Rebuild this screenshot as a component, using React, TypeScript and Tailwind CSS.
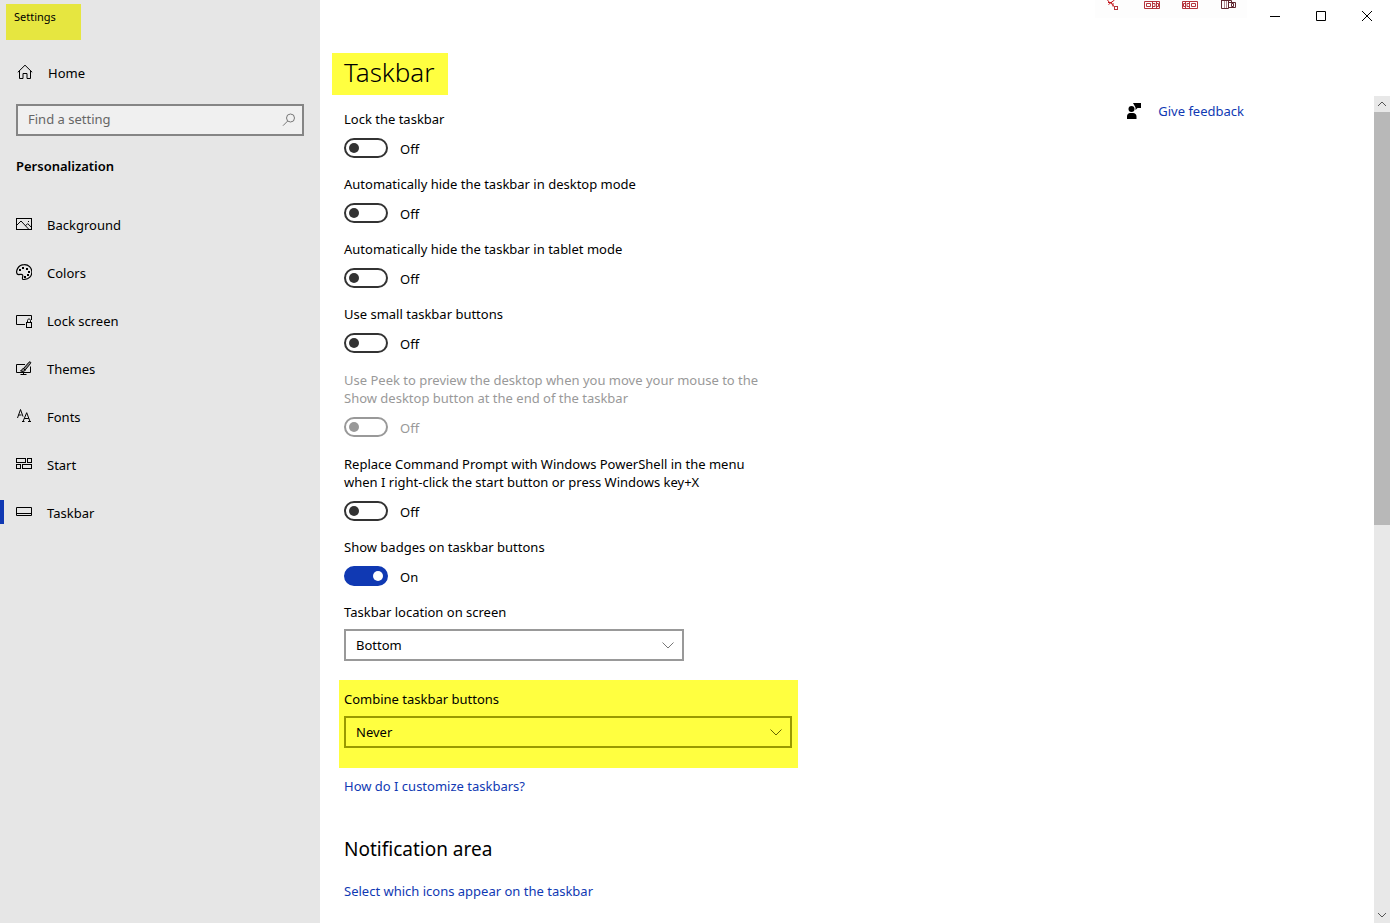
import { useState } from 'react';
import type { ReactNode } from 'react';

interface ToggleSetting {
  id: string;
  label: string;
  on?: boolean;
  disabled?: boolean;
  multiline?: boolean;
}

const TOGGLES: ToggleSetting[] = [
  { id: 'lock', label: 'Lock the taskbar' },
  { id: 'hide-desktop', label: 'Automatically hide the taskbar in desktop mode' },
  { id: 'hide-tablet', label: 'Automatically hide the taskbar in tablet mode' },
  { id: 'small', label: 'Use small taskbar buttons' },
  {
    id: 'peek',
    label: 'Use Peek to preview the desktop when you move your mouse to the Show desktop button at the end of the taskbar',
    disabled: true,
    multiline: true,
  },
  {
    id: 'powershell',
    label: 'Replace Command Prompt with Windows PowerShell in the menu when I right-click the start button or press Windows key+X',
    multiline: true,
  },
  { id: 'badges', label: 'Show badges on taskbar buttons', on: true },
];

function Icon({ children }: { children: ReactNode }) {
  return (
    <svg viewBox="0 0 16 16" className="size-4 shrink-0" fill="none" stroke="#000" aria-hidden="true">
      {children}
    </svg>
  );
}

const NAV: { label: string; icon: ReactNode }[] = [
  {
    label: 'Background',
    icon: (
      <>
        <rect x="0.5" y="2.5" width="15" height="11" />
        <path d="M.5 9.5 5 5l8 8.5M9.5 9.8l2.2-2.2 3.8 3.8" />
        <path d="M12 5.5h1" />
      </>
    ),
  },
  {
    label: 'Colors',
    icon: (
      <>
        <path
          strokeWidth="1.2"
          d="M6.7 15.2c-1-1 .8-3-.2-4.4-1.2-1.5-3.7.9-5.3-.8C-.4 7.5 1.7.6 8.3.6a7.4 7.4 0 0 1 .4 14.8c-.7.1-1.5.2-2-.2Z"
        />
        <path strokeWidth="2" d="M3 6h2M6 4h2M10 5h2M12 8h2M11 11h2M8 13h2" />
      </>
    ),
  },
  {
    label: 'Lock screen',
    icon: (
      <>
        <path d="M9 12.5H.5v-9h15V8" />
        <rect x="10.5" y="10.5" width="5" height="5" />
        <path d="M11.5 10.5V8.5c0-2 3-2 3 0v2" />
      </>
    ),
  },
  {
    label: 'Themes',
    icon: (
      <>
        <path d="M9 4.5H.5v8h14v-6M7.5 12.5v2M4.5 14.5h6" />
        <path
          fill="#888"
          d="M7.5 8.5 13 2.2c1-1 2.300.1 1.500 1.300L9.200 10ZM7.500 8.500c-2 0-1 2-3 2.300 2 1.200 4.500.700 4.700-.8Z"
        />
      </>
    ),
  },
  {
    label: 'Fonts',
    icon: (
      <>
        <path d="m1.5 10 3-8.500 2.500 7M2.500 7h3" />
        <path d="m7 13.5 3.700-8.800 3.300 8.800M8.300 10.500h4.500M6 13.500h2.500M12 13.500h3" />
      </>
    ),
  },
  {
    label: 'Start',
    icon: (
      <>
        <rect x="0.5" y="2.5" width="9" height="4" />
        <rect x="11.5" y="2.5" width="4" height="4" />
        <rect x="0.5" y="8.5" width="4" height="4" />
        <rect x="6.5" y="8.5" width="9" height="4" />
      </>
    ),
  },
  {
    label: 'Taskbar',
    icon: <path d="M.5 3.5h15v8H.5ZM.5 9.5h15" />,
  },
];

function Sidebar() {
  return (
    <aside className="w-80 shrink-0 bg-[#e6e6e6]">
      <div className="ml-1.5 mt-1 h-9 w-[75px] bg-[#e6e640] pl-2 pt-1 text-[11px]">Settings</div>
      <a href="#home" className="mt-2 flex h-12 items-center gap-[15px] pl-[17px]">
        <Icon>
          <path d="M.8 8.3 8 1.2l7.2 7.1M2.5 6.8v7.7H6v-5h4v5h3.5V6.8" />
        </Icon>
        <span className="pt-0.5">Home</span>
      </a>
      <div className="mx-4 mt-2 flex h-8 items-center border-2 border-[#858585] bg-[#f0f0f0] pl-2.5 pr-1.5">
        <input
          type="text"
          aria-label="Find a setting"
          placeholder="Find a setting"
          className="min-w-0 flex-1 bg-transparent pb-0.5 outline-none placeholder:text-[#666]"
        />
        <svg viewBox="0 0 14 14" className="size-3.5" fill="none" stroke="#777" aria-hidden="true">
          <circle cx="8.5" cy="5" r="4" />
          <path d="M5.7 8 1 12.7" />
        </svg>
      </div>
      <h2 className="ml-4 mt-5 font-semibold leading-5">Personalization</h2>
      <nav className="mt-6">
        {NAV.map(({ label, icon }) => {
          const active = label === 'Taskbar';
          return (
            <a key={label} href={`#${label}`} className="flex h-12 items-center">
              <span className={active ? 'h-6 w-1 bg-[#1039b3]' : 'h-6 w-1'} />
              <span className="flex items-center gap-[15px] pl-3">
                <Icon>{icon}</Icon>
                <span className="pt-0.5">{label}</span>
              </span>
            </a>
          );
        })}
      </nav>
    </aside>
  );
}

function TitleBar() {
  return (
    <header className="flex h-8 justify-end">
      <div className="mr-[5px] h-[18px] w-[152px] bg-[#fdfdfd]">
        <svg viewBox="0 0 152 18" className="h-[18px] w-full" fill="none" stroke="#b5343c" aria-hidden="true">
          <path stroke="#c4161c" d="M12.5 0l2 2.500M19.500 0l-6 4.500M13 2.500h4M15.500 2.500l3.500 4M18 3v3.500" />
          <rect x="19.5" y="6.5" width="3" height="3" />
          <path d="M49.5 1.5h15v7h-15ZM51.5 3.5h4v3h-4ZM57.5 1.500v7M61.500 1.500v7M58 3.500h2v3h-2M62 3.500h1.500v3H62" />
          <path d="M87.5 1.5h15v7h-15ZM96.500 3.500h4v3h-4ZM94.500 1.500v7M90.500 1.500v7M94 3.500h-2v3h2M90 3.500h-1.500v3H90" />
          <path stroke="#5f2630" d="M126.5 0v8.500h7V0M133.500 2.500h7v5h-7M136.500 3.500h2v3h-2ZM126.500.5h10v2" />
          <path stroke="#b08a90" d="M129.5 1v7M131.500 1v7" />
        </svg>
      </div>
      <button type="button" aria-label="Minimize" className="flex w-[46px] items-center justify-center">
        <svg viewBox="0 0 10 10" className="size-2.5" stroke="#000"><path d="M0 5.5h10" /></svg>
      </button>
      <button type="button" aria-label="Maximize" className="flex w-[46px] items-center justify-center">
        <svg viewBox="0 0 10 10" className="size-2.5" stroke="#000" fill="none"><path d="M.5.5h9v9h-9Z" /></svg>
      </button>
      <button type="button" aria-label="Close" className="flex w-[46px] items-center justify-center">
        <svg viewBox="0 0 10 10" className="size-2.5" stroke="#000"><path d="m0 0 10 10M10 0 0 10" /></svg>
      </button>
    </header>
  );
}

function Toggle({ setting }: { setting: ToggleSetting }) {
  const [on, setOn] = useState(Boolean(setting.on));
  return (
    <div className={`${setting.multiline ? 'pt-px' : ''} ${setting.disabled ? 'text-[#999]' : ''}`}>
      <label htmlFor={setting.id} className="block max-w-[430px]">{setting.label}</label>
      <div className="mt-2.5 flex h-5 items-center gap-3">
        <input
          id={setting.id}
          type="checkbox"
          role="switch"
          checked={on}
          disabled={setting.disabled}
          onChange={() => setOn(!on)}
          className="flex h-5 w-11 appearance-none items-center rounded-full border-2 border-[#333] px-[3px] before:size-2.5 before:rounded-full before:bg-[#333] checked:justify-end checked:border-[#1039b3] checked:bg-[#1039b3] checked:before:bg-white disabled:border-[#999] disabled:before:bg-[#999]"
        />
        <span className="pt-0.5">{on ? 'On' : 'Off'}</span>
      </div>
    </div>
  );
}

interface DropdownProps {
  id: string;
  label: string;
  options: string[];
  highlighted?: boolean;
}

function Dropdown({ id, label, options, highlighted }: DropdownProps) {
  return (
    <div className={highlighted ? '' : 'max-w-[340px]'}>
      <label htmlFor={id} className="block">{label}</label>
      <div className="relative mt-2">
        <select
          id={id}
          className={`block h-8 w-full appearance-none border-2 bg-transparent pl-2.5 text-black ${
            highlighted ? 'border-[#999900]' : 'border-[#999]'
          }`}
        >
          {options.map((o) => (
            <option key={o}>{o}</option>
          ))}
        </select>
        <span className="pointer-events-none absolute inset-y-0 right-2.5 flex items-center">
          <svg viewBox="0 0 12 12" className="size-3" fill="none" stroke={highlighted ? '#666600' : '#777'} aria-hidden="true">
            <path d="M.5 3.500 6 9l5.500-5.500" />
          </svg>
        </span>
      </div>
    </div>
  );
}

function ScrollBar() {
  return (
    <div className="flex w-4 shrink-0 flex-col bg-[#e8e8e8]">
      <button type="button" aria-label="Scroll up" className="flex h-4 items-center justify-center">
        <svg viewBox="0 0 8 8" className="size-2" fill="none" stroke="#555"><path d="m0 6 4-4 4 4" /></svg>
      </button>
      <div className="flex-1">
        <div className="h-[52%] bg-[#b8b8b8]" />
      </div>
      <button type="button" aria-label="Scroll down" className="flex h-4 items-center justify-center">
        <svg viewBox="0 0 8 8" className="size-2" fill="none" stroke="#555"><path d="m0 2 4 4 4-4" /></svg>
      </button>
    </div>
  );
}

export default function App() {
  return (
    <div className="flex h-screen overflow-hidden bg-white font-['Noto_Sans','Open_Sans',sans-serif] text-[13px] leading-[18px] text-black">
      <Sidebar />
      <div className="flex min-w-0 flex-1 flex-col">
        <TitleBar />
        <h1 className="ml-3 mt-[21px] h-[42px] w-[116px] shrink-0 bg-[#ffff40] pl-3 text-[26px] font-light leading-[38px]">
          Taskbar
        </h1>
        <div className="mt-px flex min-h-0 flex-1">
          <main className="min-w-0 flex-1 overflow-hidden pl-[19px] pt-3.5">
            <div className="flex items-start justify-between">
              <div className="w-[459px]">
                <div className="flex flex-col gap-[17px] pl-[5px]">
                  {TOGGLES.map((t) => (
                    <Toggle key={t.id} setting={t} />
                  ))}
                  <Dropdown id="location" label="Taskbar location on screen" options={['Bottom', 'Top', 'Left', 'Right']} />
                </div>
                <div className="mt-[19px] bg-[#ffff40] pb-5 pl-[5px] pr-1.5 pt-2.5">
                  <Dropdown
                    id="combine"
                    label="Combine taskbar buttons"
                    options={['Never', 'Always, hide labels', 'When taskbar is full']}
                    highlighted
                  />
                </div>
                <div className="pl-[5px]">
                  <a href="#help" className="mt-[9px] block text-[#1039b3]">How do I customize taskbars?</a>
                  <h2 className="mt-10 text-[19px] leading-7">Notification area</h2>
                  <a href="#icons" className="mt-[19px] block text-[#1039b3]">Select which icons appear on the taskbar</a>
                </div>
              </div>
              <a href="#feedback" className="-mt-2 mr-[130px] flex items-center gap-4 text-[#1039b3]">
                <svg viewBox="0 0 16 16" className="size-4" fill="#000" aria-hidden="true">
                  <circle cx="5.5" cy="6" r="3" />
                  <path d="M1 16v-2.500C1 11.500 2.500 10 4 10h3c2 0 3.500 1.500 3.500 3.500V16ZM7 0h8v5h-3.500L9.500 7V4.500Z" />
                </svg>
                Give feedback
              </a>
            </div>
          </main>
          <ScrollBar />
        </div>
      </div>
    </div>
  );
}
